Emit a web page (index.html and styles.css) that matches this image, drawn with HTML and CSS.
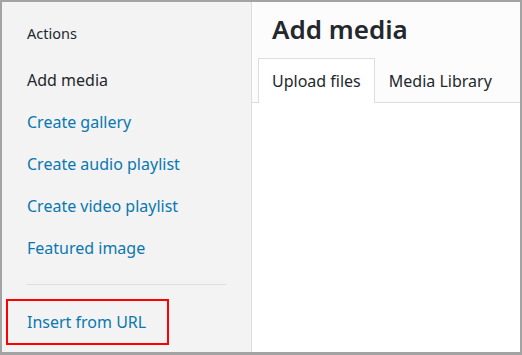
FILE: index.html
```html
<!DOCTYPE html>
<html lang="en">
<head>
    <meta charset="UTF-8">
    <meta name="viewport" content="width=device-width, initial-scale=1.0">
    <title>Add media</title>
    <link rel="stylesheet" href="styles.css">
</head>
<body>
    <div class="media-modal">
        <div class="media-menu">
            <h2 class="menu-heading">Actions</h2>
            <a class="menu-item active">Add media</a>
            <a class="menu-item">Create gallery</a>
            <a class="menu-item">Create audio playlist</a>
            <a class="menu-item">Create video playlist</a>
            <a class="menu-item">Featured image</a>
            <div class="separator"></div>
            <a class="menu-item highlighted">Insert from URL</a>
        </div>

        <div class="media-frame">
            <h1 class="frame-title">Add media</h1>
            <div class="router">
                <a class="router-tab active">Upload files</a>
                <a class="router-tab">Media Library</a>
            </div>
            <div class="frame-content"></div>
        </div>
    </div>
</body>
</html>
```

FILE: styles.css
```css
:root {
    --link-color: #0a78b0;
    --text-color: #23282d;
    --border-color: #dddddd;
}
* {
    margin: 0;
    padding: 0;
    box-sizing: border-box;
}
body {
    background: #fff;
    font-family: "Noto Sans", "Open Sans", sans-serif;
    color: var(--text-color);
}
.media-modal {
    display: flex;
    width: 522px;
    height: 355px;
    border: 2px solid #a3a3a3;
    border-bottom-width: 3px;
}
.media-menu {
    width: 250px;
    flex-shrink: 0;
    background: #f3f3f3;
    border-right: 1px solid var(--border-color);
    display: flex;
    flex-direction: column;
    padding-top: 21px;
}
.menu-heading {
    font-size: 14.5px;
    font-weight: 400;
    line-height: 20px;
    padding-left: 25px;
    margin-bottom: 16px;
}
.menu-item {
    display: block;
    height: 42px;
    line-height: 43px;
    padding-left: 25px;
    font-size: 16px;
    color: var(--link-color);
    text-decoration: none;
    cursor: pointer;
}
.menu-item.active {
    color: var(--text-color);
}
.separator {
    height: 1px;
    background: var(--border-color);
    margin: 15px 25px 14px 25px;
}
.menu-item.highlighted {
    width: 163px;
    height: 46px;
    line-height: 42px;
    margin-left: 4px;
    padding-left: 19px;
    border: 2px solid #ff0000;
}
.media-frame {
    flex: 1;
    display: flex;
    flex-direction: column;
    background: #fcfcfc;
}
.frame-title {
    height: 56px;
    line-height: 54px;
    padding-left: 20px;
    font-size: 26px;
    font-weight: 600;
}
.router {
    display: flex;
    height: 45px;
    padding-left: 6px;
    border-bottom: 1px solid var(--border-color);
}
.router-tab {
    display: block;
    height: 45px;
    line-height: 44px;
    padding: 0 13px;
    font-size: 16px;
    color: var(--text-color);
    border: 1px solid transparent;
    border-bottom: none;
    cursor: pointer;
}
.router-tab.active {
    background: #fff;
    border-color: var(--border-color);
}
.frame-content {
    flex: 1;
    background: #fff;
}
```
